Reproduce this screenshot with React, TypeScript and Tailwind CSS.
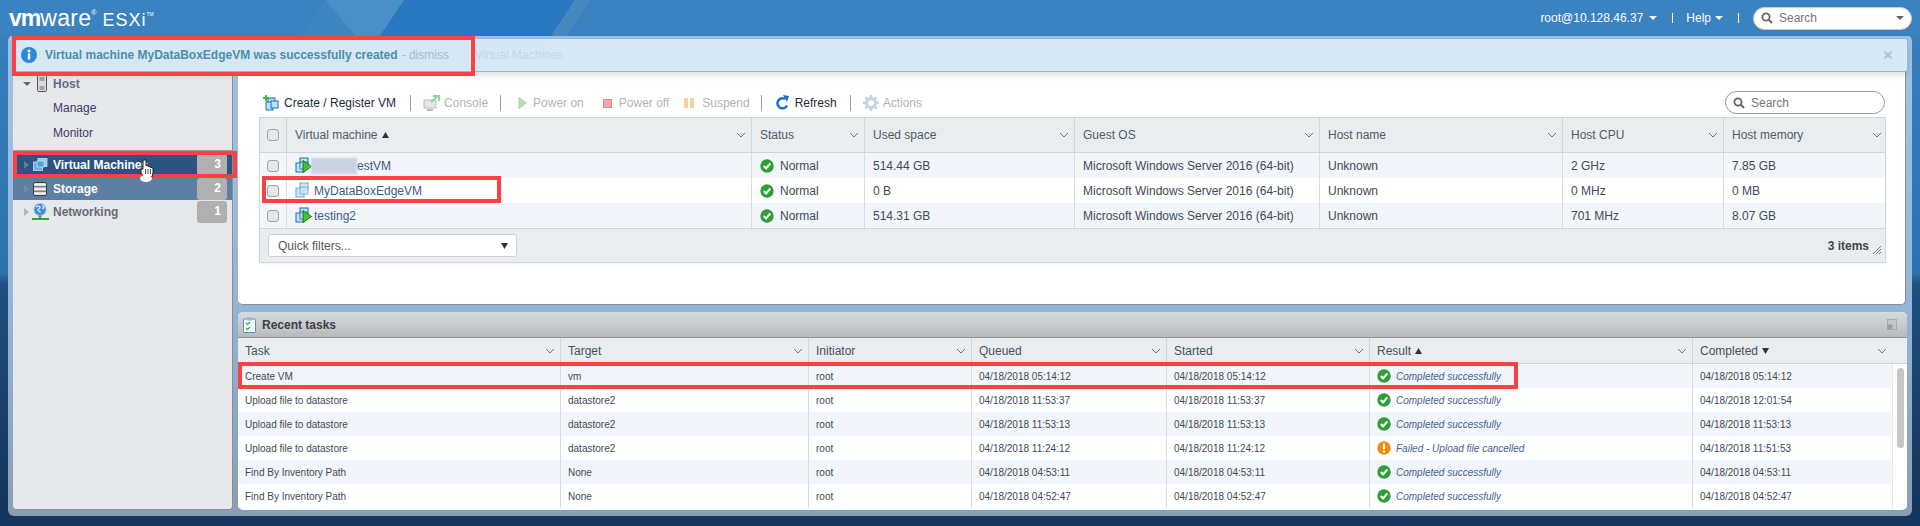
import type { ReactNode } from "react";

const vmColumns = "grid-cols-[27px_465px_113px_210px_245px_243px_161px_163px]";
const taskColumns = "grid-cols-[323px_248px_163px_195px_203px_323px_1fr]";

const vmHeaders = ["Status", "Used space", "Guest OS", "Host name", "Host CPU", "Host memory"];

const vmRows = [
  { name: "TestVM", on: true, used: "514.44 GB", cpu: "2 GHz", mem: "7.85 GB", blur: true },
  { name: "MyDataBoxEdgeVM", on: false, used: "0 B", cpu: "0 MHz", mem: "0 MB", blur: false },
  { name: "testing2", on: true, used: "514.31 GB", cpu: "701 MHz", mem: "8.07 GB", blur: false },
];

const tasks = [
  ["Create VM", "vm", "04/18/2018 05:14:12", "04/18/2018 05:14:12", "Completed successfully", "04/18/2018 05:14:12"],
  ["Upload file to datastore", "datastore2", "04/18/2018 11:53:37", "04/18/2018 11:53:37", "Completed successfully", "04/18/2018 12:01:54"],
  ["Upload file to datastore", "datastore2", "04/18/2018 11:53:13", "04/18/2018 11:53:13", "Completed successfully", "04/18/2018 11:53:13"],
  ["Upload file to datastore", "datastore2", "04/18/2018 11:24:12", "04/18/2018 11:24:12", "Failed - Upload file cancelled", "04/18/2018 11:51:53"],
  ["Find By Inventory Path", "None", "04/18/2018 04:53:11", "04/18/2018 04:53:11", "Completed successfully", "04/18/2018 04:53:11"],
  ["Find By Inventory Path", "None", "04/18/2018 04:52:47", "04/18/2018 04:52:47", "Completed successfully", "04/18/2018 04:52:47"],
];

function Chevron() {
  return (
    <svg width="10" height="6" viewBox="0 0 10 6" className="shrink-0">
      <path d="M1 1l4 4 4-4" fill="none" stroke="#6b7280" strokeWidth="1" />
    </svg>
  );
}

function Caret({ color = "#fff" }: { color?: string }) {
  return (
    <svg width="8" height="4" viewBox="0 0 8 4">
      <path d="M0 0h8L4 4z" fill={color} />
    </svg>
  );
}

function SearchGlass() {
  return (
    <svg width="12" height="12" viewBox="0 0 12 12" className="shrink-0">
      <circle cx="5" cy="5" r="3.6" fill="none" stroke="#666" strokeWidth="1.8" />
      <path d="M7.6 7.6L11 11" stroke="#666" strokeWidth="2" />
    </svg>
  );
}

function VmIcon({ on }: { on: boolean }) {
  const stroke = on ? "#1b6fb5" : "#6aa7d8";
  const fill = on ? "#bfe0f5" : "#cfe6f7";
  return (
    <svg width="18" height="17" viewBox="0 0 18 17" className="shrink-0">
      <rect x="5" y="1" width="8" height="7" fill={fill} stroke={stroke} />
      <rect x="1" y="6" width="8" height="9" fill={fill} stroke={stroke} />
      <rect x="5" y="5" width="8" height="7" fill={fill} stroke={stroke} opacity="0.8" />
      {on && <path d="M8 3.5v12L16.5 9.5z" fill="#47c02f" stroke="#1f7a16" />}
    </svg>
  );
}

function SideVmIcon() {
  return (
    <svg width="15" height="13" viewBox="0 0 15 13" className="shrink-0">
      <rect x="5" y="0.5" width="9" height="8" fill="#8cc6ee" stroke="#d7eefc" strokeWidth="0.7" />
      <rect x="0.5" y="4" width="9" height="8.5" fill="#63aee3" stroke="#d7eefc" strokeWidth="0.7" />
      <rect x="4" y="3" width="7" height="6" fill="#4f9fdc" stroke="#d7eefc" strokeWidth="0.7" />
    </svg>
  );
}

function CheckIcon() {
  return (
    <svg width="14" height="14" viewBox="0 0 14 14" className="shrink-0">
      <circle cx="7" cy="7" r="6.7" fill="#2e9e37" />
      <path d="M3.8 7l2.3 2.5 4.2-5" fill="none" stroke="#fff" strokeWidth="2" />
    </svg>
  );
}

function WarnIcon() {
  return (
    <svg width="14" height="14" viewBox="0 0 14 14" className="shrink-0">
      <circle cx="7" cy="7" r="6.7" fill="#f28a0c" />
      <path d="M7 2.6v5.6" stroke="#fff" strokeWidth="2" />
      <circle cx="7" cy="10.6" r="1.2" fill="#fff" />
    </svg>
  );
}

function Checkbox() {
  return <span className="block w-[12px] h-[12px] rounded-[3px] border border-[#a3a3a3] bg-[#e6e6e6]" />;
}

function Sep({ className }: { className: string }) {
  return <span className={`w-px h-[16px] bg-[#9a9a9a] shrink-0 ${className}`} />;
}

function ToolItem({ icon, label, muted = false, className }: { icon: ReactNode; label: string; muted?: boolean; className: string }) {
  return (
    <span className={`flex items-center shrink-0 ${muted ? "text-[#b3b3b3]" : "text-[#1c2b3a]"} ${className}`}>
      {icon}
      {label}
    </span>
  );
}

function SideRow({ icon, label, count, tone }: { icon: ReactNode; label: string; count: string; tone: string }) {
  return (
    <div className={`flex items-center pl-[11px] pr-[5px] ${tone}`}>
      <svg width="5" height="8" viewBox="0 0 5 8" className="shrink-0">
        <path d="M0 0l5 4-5 4z" fill="#8a96a6" opacity="0.6" />
      </svg>
      <span className="w-[20px] ml-[1px] flex justify-center shrink-0">{icon}</span>
      <span className="ml-[3px] font-bold flex-1 whitespace-nowrap">{label}</span>
      <span className="w-[30px] h-[22px] rounded-[3px] bg-[#b0b0b0] text-white font-bold text-right pr-[6px] leading-[20px]">{count}</span>
    </div>
  );
}

function Sidebar() {
  return (
    <aside className="w-[220px] h-full shrink-0 bg-[#e7e8ec] rounded-[4px] border-b border-r border-[#8e8e8e] text-[12px] text-[#4a5160] pt-[34px]">
      <div className="h-[76px]">
        <div className="flex items-center h-[23px] pl-[10px]">
          <Caret color="#666" />
          <svg width="10" height="17" viewBox="0 0 10 17" className="ml-[6px]">
            <rect x="0.5" y="0.5" width="9" height="16" rx="1" fill="#dcdcdc" stroke="#555" />
            <path d="M2.5 3h5M2.5 5h5M2.5 12h5M2.5 14h5" stroke="#666" />
          </svg>
          <span className="ml-[6px] font-bold text-[#666b78]">Host</span>
        </div>
        <div className="pl-[40px] pt-[4px] h-[25px] text-[#3f3a66]">Manage</div>
        <div className="pl-[40px] pt-[4px] h-[25px] text-[#3f3a66]">Monitor</div>
      </div>
      <div className="mt-[2px] h-[2px] bg-[#9b9b9b]" />
      <SideRow icon={<SideVmIcon />} label="Virtual Machines" count="3" tone="h-[25px] bg-[#2b5480] text-white" />
      <SideRow
        icon={
          <svg width="14" height="14" viewBox="0 0 14 14">
            <rect x="0.5" y="0.5" width="13" height="13" rx="1.5" fill="#dedede" stroke="#3c3c3c" />
            <path d="M0.5 4.8h13M0.5 9.2h13" stroke="#555" />
            <path d="M1 2.500h12M1 7h12M1 11.500h12" stroke="#f5f5f5" />
          </svg>
        }
        label="Storage"
        count="2"
        tone="h-[23px] bg-[#5f7ea3] text-white"
      />
      <SideRow
        icon={
          <svg width="17" height="18" viewBox="0 0 17 18">
            <circle cx="8" cy="6.500" r="6" fill="#3f8fdb" stroke="#9cbedd" />
            <path d="M4 4c2-1.500 4-1 4 .5s-2 1-2 2.500 2 1 2.500 2.500M10 2.500l2 1.500-1.500 2" fill="none" stroke="#dbeefc" strokeWidth="1.300" />
            <rect x="6.500" y="12.500" width="3" height="2.500" fill="#8a8a8a" />
            <rect x="0" y="15" width="17" height="2" fill="#2ea82e" />
          </svg>
        }
        label="Networking"
        count="1"
        tone="h-[23px] text-[#666b78]"
      />
    </aside>
  );
}

function VmTable() {
  return (
    <div className="border border-[#d2d4d6] text-[12px] text-[#3f4a58] shadow-[0_1px_2px_rgba(0,0,0,0.06)]">
      <div className={`grid ${vmColumns} h-[35px] bg-[#eaedf0] border-b border-[#d2d4d6] text-[#4f5b68]`}>
        <div className="flex items-center justify-center border-r border-[#d2d4d6]">
          <Checkbox />
        </div>
        <div className="flex items-center justify-between pl-[8px] pr-[5px] border-r border-[#d2d4d6]">
          <span className="flex items-center gap-[4px]">
            Virtual machine
            <svg width="7" height="6" viewBox="0 0 7 6">
              <path d="M0 6l3.500-6L7 6z" fill="#333" />
            </svg>
          </span>
          <Chevron />
        </div>
        {vmHeaders.map((h) => (
          <div key={h} className="flex items-center justify-between pl-[8px] pr-[5px] border-r last:border-r-0 border-[#d2d4d6]">
            {h}
            <Chevron />
          </div>
        ))}
      </div>
      {vmRows.map((row, i) => (
        <div key={row.name} className={`grid ${vmColumns} h-[25px] items-stretch ${i % 2 === 0 ? "bg-[#f2f5fa]" : "bg-white"}`}>
          <div className="flex items-center justify-center border-r border-[#d9dbdd]">
            <Checkbox />
          </div>
          <div className="flex items-center pl-[8px] border-r border-[#d9dbdd] text-[#3c5a8a]">
            <VmIcon on={row.on} />
            {row.blur && <span className="w-[46px] h-[16px] -ml-[2px] bg-[#c9d2e2] blur-[1px]" />}
            <span className={row.blur ? "" : "ml-[1px]"}>{row.blur ? "estVM" : row.name}</span>
          </div>
          <div className="flex items-center gap-[6px] pl-[8px] border-r border-[#d9dbdd]">
            <CheckIcon />
            Normal
          </div>
          <div className="flex items-center pl-[8px] border-r border-[#d9dbdd]">{row.used}</div>
          <div className="flex items-center pl-[8px] border-r border-[#d9dbdd]">Microsoft Windows Server 2016 (64-bit)</div>
          <div className="flex items-center pl-[8px] border-r border-[#d9dbdd]">Unknown</div>
          <div className="flex items-center pl-[8px] border-r border-[#d9dbdd]">{row.cpu}</div>
          <div className="flex items-center pl-[8px]">{row.mem}</div>
        </div>
      ))}
      <div className="h-[34px] bg-[#eaedf0] border-t border-[#d2d4d6] flex items-center justify-between pl-[8px] pr-[4px]">
        <div className="w-[249px] h-[23px] bg-white border border-[#cfcfcf] rounded-[3px] flex items-center justify-between pl-[9px] pr-[8px] text-[#555]">
          Quick filters...
          <svg width="7" height="6" viewBox="0 0 7 6">
            <path d="M0 0h7L3.500 6z" fill="#333" />
          </svg>
        </div>
        <div className="flex items-end gap-[4px] text-[#333]">
          <span className="font-bold text-[#444]">3 items</span>
          <svg width="8" height="8" viewBox="0 0 8 8" className="mb-[1px]">
            <path d="M0 8l8-8M3 8l5-5M6 8l2-2" stroke="#777" />
          </svg>
        </div>
      </div>
    </div>
  );
}

function VmPanel() {
  return (
    <section className="h-[234px] shrink-0 bg-white rounded-b-[5px] border-r border-b border-[#8a8f96] pt-[17px] pl-[21px] pr-[19px] mr-[1px]">
      <div className="h-[29px] pt-[3px] flex items-start justify-between text-[12px]">
        <div className="flex items-center h-[24px] pl-[4px]">
          <ToolItem
            className="gap-[5px]"
            label="Create / Register VM"
            icon={
              <svg width="16" height="16" viewBox="0 0 16 16" className="shrink-0">
                <rect x="5" y="3" width="7" height="6" fill="#bfe0f5" stroke="#1b6fb5" />
                <rect x="3" y="7" width="7" height="8" fill="#bfe0f5" stroke="#1b6fb5" />
                <rect x="8" y="6" width="7" height="7" fill="#bfe0f5" stroke="#1b6fb5" />
                <path d="M3 0v6M0 3h6" stroke="#3fb54a" strokeWidth="2" />
              </svg>
            }
          />
          <Sep className="ml-[14px]" />
          <ToolItem
            muted
            className="ml-[12px] gap-[4px]"
            label="Console"
            icon={
              <svg width="17" height="16" viewBox="0 0 17 16" className="shrink-0">
                <rect x="1" y="5" width="12" height="8" fill="#e3e5e8" stroke="#b9bdc2" />
                <path d="M4 15h6" stroke="#b9bdc2" strokeWidth="2" />
                <path d="M8 7l6-5M10 1h6v5" fill="none" stroke="#8fd39a" strokeWidth="2" />
              </svg>
            }
          />
          <Sep className="ml-[12px]" />
          <ToolItem
            muted
            className="ml-[17px] gap-[6px]"
            label="Power on"
            icon={
              <svg width="9" height="12" viewBox="0 0 9 12" className="shrink-0">
                <path d="M1 0.500v11L8 6z" fill="#b6e0b0" stroke="#a3d29c" />
              </svg>
            }
          />
          <ToolItem
            muted
            className="ml-[19px] gap-[7px]"
            label="Power off"
            icon={<span className="w-[9px] h-[9px] bg-[#f2a5a5] border border-[#e08a8a]" />}
          />
          <ToolItem
            muted
            className="ml-[15px] gap-[8px]"
            label="Suspend"
            icon={
              <svg width="10" height="10" viewBox="0 0 10 10" className="shrink-0">
                <path d="M0 0h4v10H0zM6 0h4v10H6z" fill="#fbcf9a" />
              </svg>
            }
          />
          <Sep className="ml-[11px]" />
          <ToolItem
            className="ml-[13px] gap-[5px]"
            label="Refresh"
            icon={
              <svg width="15" height="16" viewBox="0 0 15 16" className="shrink-0">
                <path d="M12 10.500A5 5 0 1 1 10 4" fill="none" stroke="#1673d1" strokeWidth="2.500" />
                <path d="M8 0l6 1-2 6z" fill="#1673d1" />
              </svg>
            }
          />
          <Sep className="ml-[13px]" />
          <ToolItem
            muted
            className="ml-[12px] gap-[4px]"
            label="Actions"
            icon={
              <svg width="16" height="16" viewBox="0 0 16 16" className="shrink-0">
                <circle cx="8" cy="8" r="4.500" fill="none" stroke="#c4d3e6" strokeWidth="3" />
                <path d="M8 0v3M8 13v3M0 8h3M13 8h3M2.300 2.300l2 2M11.700 11.700l2 2M2.300 13.700l2-2M11.700 4.300l2-2" stroke="#c4d3e6" strokeWidth="2.500" />
              </svg>
            }
          />
        </div>
        <div className="w-[160px] h-[23px] mr-[1px] rounded-full border border-[#9a9a9a] flex items-center gap-[6px] pl-[7px] text-[#777]">
          <SearchGlass />
          Search
        </div>
      </div>
      <VmTable />
    </section>
  );
}

function TasksPanel() {
  const headers = ["Task", "Target", "Initiator", "Queued", "Started"];
  return (
    <section className="flex-1 min-h-0 bg-white rounded-[5px] overflow-hidden mt-[7px] text-[#44505e]">
      <div className="h-[26px] bg-gradient-to-b from-[#d9dadd] to-[#b9babd] flex items-center justify-between pl-[5px] pr-[10px] border-b border-[#8f9296]">
        <span className="flex items-center gap-[6px] text-[12px] font-bold text-[#3a4048]">
          <svg width="13" height="16" viewBox="0 0 13 16">
            <rect x="0.500" y="2" width="12" height="13.500" rx="1" fill="#f4fbff" stroke="#5d8db3" />
            <rect x="4" y="0.500" width="5" height="3" fill="#9bb8cf" />
            <path d="M3 6l1.500 1.500L7 5M3 11l1.500 1.500L7 10" fill="none" stroke="#3aa23a" strokeWidth="1.200" />
          </svg>
          Recent tasks
        </span>
        <svg width="10" height="11" viewBox="0 0 10 11">
          <rect x="0.500" y="0.500" width="9" height="10" fill="#c5c6c9" stroke="#a9aaad" />
          <rect x="0.500" y="5.500" width="5" height="5" fill="#9d9ea1" />
        </svg>
      </div>
      <div className={`grid ${taskColumns} h-[26px] bg-[#eaedf0] border-b border-[#d2d4d6] text-[12px]`}>
        {headers.map((h) => (
          <div key={h} className="flex items-center justify-between pl-[7px] pr-[5px] border-r border-[#d2d4d6]">
            {h}
            <Chevron />
          </div>
        ))}
        <div className="flex items-center justify-between pl-[7px] pr-[5px] border-r border-[#d2d4d6]">
          <span className="flex items-center gap-[4px]">
            Result
            <svg width="7" height="6" viewBox="0 0 7 6">
              <path d="M0 6l3.500-6L7 6z" fill="#333" />
            </svg>
          </span>
          <Chevron />
        </div>
        <div className="flex items-center justify-between pl-[7px] pr-[20px]">
          <span className="flex items-center gap-[4px]">
            Completed
            <svg width="7" height="6" viewBox="0 0 7 6">
              <path d="M0 0h7L3.500 6z" fill="#333" />
            </svg>
          </span>
          <Chevron />
        </div>
      </div>
      <div className="flex h-[145px]">
        <div className="flex-1 min-w-0">
          {tasks.map((t, i) => (
            <div key={i} className={`grid ${taskColumns} h-[24px] text-[10px] text-[#3f4954] ${i % 2 === 0 ? "bg-[#f2f5fa]" : "bg-white"}`}>
              <div className="flex items-center pl-[7px] border-r border-[#d9dbdd]">{t[0]}</div>
              <div className="flex items-center pl-[7px] border-r border-[#d9dbdd]">{t[1]}</div>
              <div className="flex items-center pl-[7px] border-r border-[#d9dbdd]">root</div>
              <div className="flex items-center pl-[7px] border-r border-[#d9dbdd]">{t[2]}</div>
              <div className="flex items-center pl-[7px] border-r border-[#d9dbdd]">{t[3]}</div>
              <div className="flex items-center gap-[5px] pl-[7px] border-r border-[#d9dbdd] italic text-[#44618e]">
                {t[4].startsWith("Failed") ? <WarnIcon /> : <CheckIcon />}
                {t[4]}
              </div>
              <div className="flex items-center pl-[7px]">{t[5]}</div>
            </div>
          ))}
        </div>
        <div className="w-[15px] shrink-0 pt-[4px] flex justify-center bg-white border-l border-[#e6e6e6]">
          <span className="block w-[7px] h-[80px] rounded-full bg-[#c6c6c6]" />
        </div>
      </div>
    </section>
  );
}

function HeaderBar() {
  return (
    <header className="relative h-[36px] shrink-0 bg-[#3a82c0] overflow-hidden flex items-center justify-between pl-[9px] pr-[8px]">
      <svg className="absolute top-0 left-0" width="1920" height="36" viewBox="0 0 1920 36">
        <path d="M325 0h79l-24 36h-25z" fill="#4a90c8" />
        <path d="M325 0l-25 36h55z" fill="#3d86c2" />
        <path d="M404 0h171l-24 36H380z" fill="#2a77c1" />
        <path d="M575 0h15l-24 36h-15z" fill="#4688c0" />
      </svg>
      <div className="relative flex items-baseline text-white leading-none">
        <span className="text-[23px] font-bold tracking-[-1px]">vm</span>
        <span className="text-[23px] tracking-[0.3px]">ware</span>
        <span className="text-[7px] self-start mt-[2px]">®</span>
        <span className="text-[18px] ml-[6px] tracking-[1px]">ESXi</span>
        <span className="text-[5px] self-start mt-[5px]">TM</span>
      </div>
      <div className="relative flex items-center text-[12px] text-white">
        <span>root@10.128.46.37</span>
        <span className="ml-[6px]"><Caret /></span>
        <span className="w-px h-[10px] bg-white ml-[15px]" />
        <span className="ml-[13px]">Help</span>
        <span className="ml-[4px]"><Caret /></span>
        <span className="w-px h-[10px] bg-white ml-[15px]" />
        <div className="w-[159px] h-[23px] ml-[14px] rounded-full bg-white border border-[#c9c9c9] flex items-center pl-[7px] pr-[7px] text-[#777]">
          <SearchGlass />
          <span className="ml-[6px] flex-1">Search</span>
          <Caret color="#666" />
        </div>
      </div>
    </header>
  );
}

export default function App() {
  return (
    <div className="relative w-[1920px] h-[526px] overflow-hidden bg-[linear-gradient(180deg,#3a82c0_0%,#2c72ac_52%,#1f4f80_54%,#17365d_96%)] font-['Liberation_Sans',Arial,sans-serif]">
      <HeaderBar />
      <main className="mx-[8px] h-[481px] -mt-[1px] flex gap-[5px] bg-gradient-to-b from-[#a4c3e4] via-[#94b5d8] via-55% to-[#8a9db6] rounded-[6px] pl-[5px] pr-[5px] pt-[3px] pb-[6px]">
        <Sidebar />
        <div className="flex-1 min-w-0 flex flex-col pt-[33px]">
          <VmPanel />
          <TasksPanel />
        </div>
      </main>

      {/* notification lies over the panels */}
      <div className="absolute left-[13px] top-[38px] w-[1895px] h-[34px] bg-[#d6e8f4] border border-[#8db8ea] rounded-[3px] flex items-center pl-[7px] pr-[15px] text-[12px] shadow-[0_3px_6px_rgba(0,0,0,0.12)]">
        <svg width="16" height="16" viewBox="0 0 16 16" className="shrink-0">
          <circle cx="8" cy="8" r="8" fill="#2f86dc" />
          <circle cx="8" cy="4" r="1.500" fill="#fff" />
          <path d="M8 6.500v6" stroke="#fff" strokeWidth="2.500" />
        </svg>
        <span className="ml-[8px] font-bold text-[#4d8dab]">Virtual machine MyDataBoxEdgeVM was successfully created</span>
        <span className="ml-[4px] text-[#9fbccd]">- dismiss</span>
        <span className="ml-[26px] text-[#c3d6e3]">Virtual Machines</span>
        <svg width="8" height="8" viewBox="0 0 8 8" className="ml-auto shrink-0">
          <path d="M0.500 0.500l7 7M7.500 0.500l-7 7" stroke="#a3c6d9" strokeWidth="2" />
        </svg>
      </div>

      {/* red annotation boxes and mouse cursor */}
      <div className="absolute left-[12px] top-[36px] w-[463px] h-[40px] border-[4px] border-[#fd4044]" />
      <div className="absolute left-[13px] top-[151px] w-[224px] h-[27px] border-[4px] border-[#fd4044]" />
      <div className="absolute left-[262px] top-[176px] w-[239px] h-[27px] border-[4px] border-[#fd4044]" />
      <div className="absolute left-[238px] top-[362px] w-[1280px] h-[27px] border-[4px] border-[#fd4044]" />
      <svg className="absolute left-[139px] top-[159px]" width="15" height="24" viewBox="0 0 15 24">
        <path d="M4 1v9H2v4l3 4h8l1-4V9l-3-1-2-1-2-.500V1z" fill="#fff" stroke="#222" />
        <path d="M6.500 10v5M9 10v5M11.500 10v5" stroke="#222" strokeWidth="0.800" />
        <ellipse cx="7" cy="19.500" rx="6" ry="3.500" fill="#fff" />
      </svg>
    </div>
  );
}
